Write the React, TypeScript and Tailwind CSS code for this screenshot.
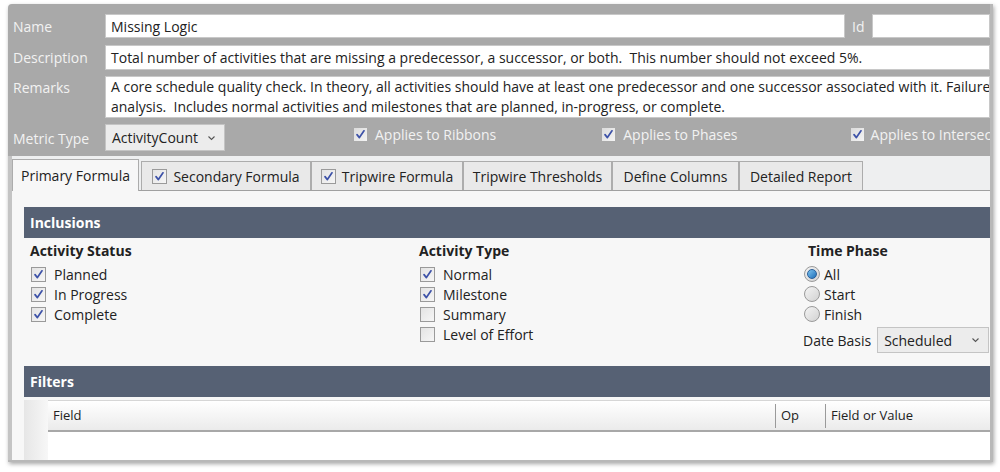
import React from "react";

const font = { fontFamily: '"Open Sans", "Noto Sans", sans-serif' };

function Check({ checked, dim }: { checked: boolean; dim?: boolean }) {
  return (
    <span
      className={
        "inline-flex items-center justify-center w-[15px] h-[15px] shrink-0 border " +
        (dim
          ? "border-[#9a9a9a] bg-gradient-to-br from-[#e4e4e4] to-[#f6f6f6]"
          : "border-[#a9a9a9] bg-gradient-to-br from-[#dcdcdc] to-[#f4f4f4]")
      }
    >
      {checked && (
        <svg width="11" height="11" viewBox="0 0 11 11">
          <path d="M2 5.6 L4.4 8.6 L9 1.8" fill="none" stroke="#3d52a8" strokeWidth="1.7" strokeLinecap="round" strokeLinejoin="round" />
        </svg>
      )}
    </span>
  );
}

function Radio({ on }: { on: boolean }) {
  return (
    <span className="inline-flex items-center justify-center w-[16px] h-[16px] shrink-0 rounded-full border border-[#9a9a9a] bg-gradient-to-br from-[#f4f4f4] to-[#d2d2d2]">
      {on && <span className="w-[10px] h-[10px] rounded-full bg-gradient-to-br from-[#7cc4f0] to-[#1a6fb8] border border-[#2a5f9a]" />}
    </span>
  );
}

function Chevron() {
  return (
    <svg width="9" height="6" viewBox="0 0 9 6">
      <path d="M1.5 1.5 L4.5 4.5 L7.5 1.5" fill="none" stroke="#555" strokeWidth="1.1" />
    </svg>
  );
}

const tabs = [
  { label: "Primary Formula", w: 127, check: false, active: true },
  { label: "Secondary Formula", w: 170, check: true },
  { label: "Tripwire Formula", w: 152, check: true },
  { label: "Tripwire Thresholds", w: 149, check: false },
  { label: "Define Columns", w: 127, check: false },
  { label: "Detailed Report", w: 124, check: false },
];

export default function App() {
  return (
    <div className="w-[1000px] h-[472px] bg-white overflow-hidden pt-[4px] pl-[8px] text-[14px] text-[#222]" style={font}>
      <div className="w-[985px] h-[458px] rounded-tl-[4px] bg-[#a9a9a9] border-r-[3px] border-b-[2px] border-[#b8b8b8] shadow-[1px_2px_4px_rgba(0,0,0,0.35)] flex flex-col overflow-hidden">
        {/* header fields */}
        <div className="flex flex-col pt-[10px] pb-[5px] gap-[6px]">
          <div className="flex items-center h-[24px]">
            <span className="w-[97px] shrink-0 pl-[5px] text-[#f2f2f2]">Name</span>
            <div className="w-[740px] shrink-0 h-[24px] bg-white border border-[#c8c8c8] flex items-center px-[5px]">Missing Logic</div>
            <span className="w-[27px] shrink-0 pl-[7px] text-[#f2f2f2]">Id</span>
            <div className="flex-1 h-[24px] bg-white border border-[#c8c8c8]" />
          </div>
          <div className="flex items-center h-[25px] mt-[1px]">
            <span className="w-[97px] shrink-0 pl-[5px] text-[#f2f2f2]">Description</span>
            <div className="flex-1 h-[25px] bg-white border border-[#c8c8c8] flex items-center px-[5px] whitespace-nowrap overflow-hidden">
              Total number of activities that are missing a predecessor, a successor, or both.&nbsp; This number should not exceed 5%.
            </div>
          </div>
          <div className="flex items-start h-[42px]">
            <span className="w-[97px] shrink-0 pl-[5px] pt-[1px] text-[#f2f2f2]">Remarks</span>
            <div className="flex-1 h-[42px] bg-white border border-[#c8c8c8] px-[5px] leading-[20px] whitespace-nowrap overflow-hidden">
              <div>A core schedule quality check. In theory, all activities should have at least one predecessor and one successor associated with it. Failure to</div>
              <div>analysis.&nbsp; Includes normal activities and milestones that are planned, in-progress, or complete.</div>
            </div>
          </div>
          <div className="flex items-center h-[27px] whitespace-nowrap">
            <span className="w-[97px] shrink-0 pl-[5px] pt-[2px] text-[#f2f2f2]">Metric Type</span>
            <div className="w-[120px] shrink-0 h-[27px] bg-[#ececec] border border-[#c4c4c4] flex items-center justify-between pl-[6px] pr-[8px]">
              <span>ActivityCount</span>
              <Chevron />
            </div>
            <div className="flex shrink-0 items-center gap-[7px] ml-[128px] text-[#f2f2f2] -mt-[7px]">
              <Check checked />
              <span>Applies to Ribbons</span>
            </div>
            <div className="flex shrink-0 items-center gap-[7px] ml-[105px] text-[#f2f2f2] -mt-[7px]">
              <Check checked />
              <span>Applies to Phases</span>
            </div>
            <div className="flex shrink-0 items-center gap-[6px] ml-[112px] text-[#f2f2f2] -mt-[7px]">
              <Check checked />
              <span>Applies to Intersections</span>
            </div>
          </div>
        </div>

        {/* lower tabbed area */}
        <div className="flex-1 flex flex-col border-l-[4px] border-[#c4c4c4] bg-[#f7f7f7] overflow-hidden">
          <div className="h-[35px] bg-[#eeeff0] flex items-end border-b border-[#a0a0a0]">
            {tabs.map((t) => (
              <div
                key={t.label}
                className={
                  "flex items-center justify-center gap-[6px] border border-b-0 border-[#acacac] -mb-px shrink-0 whitespace-nowrap " +
                  (t.active ? "h-[32px] bg-[#f7f7f7] mr-[2px]" : "h-[29px] bg-[#e9e9e9] mb-0")
                }
                style={{ width: t.w }}
              >
                {t.check && <Check checked dim />}
                <span>{t.label}</span>
              </div>
            ))}
          </div>

          <div className="pl-[12px] pt-[16px] flex flex-col">
            <div className="h-[31px] bg-[#566174] text-white font-bold flex items-center pl-[6px]">Inclusions</div>
            <div className="grid grid-cols-[389px_384px_1fr] pl-[6px] pt-[2px] h-[128px]">
              <div className="flex flex-col">
                <div className="font-bold h-[24px] leading-[22px]">Activity Status</div>
                {["Planned", "In Progress", "Complete"].map((s) => (
                  <div key={s} className="flex items-center gap-[8px] h-[20px] pl-[1px]">
                    <Check checked dim />
                    <span>{s}</span>
                  </div>
                ))}
              </div>
              <div className="flex flex-col">
                <div className="font-bold h-[24px] leading-[22px]">Activity Type</div>
                {[
                  ["Normal", true],
                  ["Milestone", true],
                  ["Summary", false],
                  ["Level of Effort", false],
                ].map(([s, c]) => (
                  <div key={s as string} className="flex items-center gap-[8px] h-[20px] pl-[1px]">
                    <Check checked={c as boolean} dim />
                    <span>{s as string}</span>
                  </div>
                ))}
              </div>
              <div className="flex flex-col">
                <div className="font-bold h-[24px] leading-[22px] pl-[5px]">Time Phase</div>
                {[
                  ["All", true],
                  ["Start", false],
                  ["Finish", false],
                ].map(([s, on]) => (
                  <div key={s as string} className="flex items-center gap-[4px] h-[20px] pl-[1px]">
                    <Radio on={on as boolean} />
                    <span>{s as string}</span>
                  </div>
                ))}
                <div className="flex items-center gap-[6px] mt-[3px]">
                  <span>Date Basis</span>
                  <div className="w-[112px] h-[26px] bg-[#ececec] border border-[#c4c4c4] flex items-center justify-between pl-[6px] pr-[8px]">
                    <span>Scheduled</span>
                    <Chevron />
                  </div>
                </div>
              </div>
            </div>
            <div className="h-[31px] bg-[#566174] text-white font-bold flex items-center pl-[6px]">Filters</div>
            <div className="flex mt-[3px] h-[60px]">
              <div className="w-[24px] bg-gradient-to-r from-[#e6e6e6] to-[#f7f7f7]" />
              <div className="flex-1 flex flex-col bg-white">
                <div className="h-[32px] flex items-center border-t border-[#d6d6d6] border-b-2 border-b-[#a8a8a8] bg-gradient-to-b from-white to-[#ebebeb] text-[13px]">
                  <span className="w-[727px] pl-[5px]">Field</span>
                  <span className="h-[24px] border-l border-[#9a9a9a] w-[50px] pl-[5px] flex items-center">Op</span>
                  <span className="h-[24px] border-l border-[#9a9a9a] pl-[5px] flex items-center">Field or Value</span>
                </div>
                <div className="flex-1 bg-white" />
              </div>
            </div>
          </div>
        </div>
      </div>
    </div>
  );
}
